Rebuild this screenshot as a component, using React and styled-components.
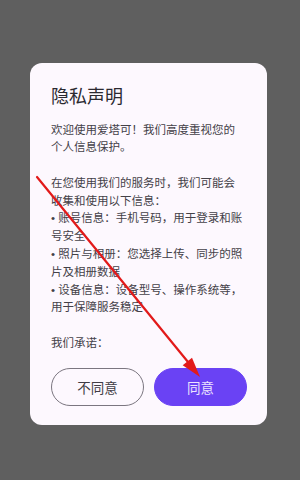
import React from "react";
import styled, { createGlobalStyle } from "styled-components";

const GlobalStyle = createGlobalStyle`
  html, body {
    margin: 0;
    padding: 0;
    background: #5f5f5f;
  }
  body {
    font-family: "Noto Sans CJK SC", "Noto Sans", sans-serif;
  }
`;

const Screen = styled.div`
  position: relative;
  width: 300px;
  height: 480px;
  box-sizing: border-box;
  padding: 63px 0 0 30px;
  background: #5f5f5f;
  overflow: hidden;
`;

const Dialog = styled.div`
  width: 237px;
  box-sizing: border-box;
  padding: 20px 20px 19px 21px;
  background: #fdf8fe;
  border-radius: 12px;
  display: flex;
  flex-direction: column;
`;

const Title = styled.h2`
  margin: 0;
  font-size: 18px;
  line-height: 24px;
  font-weight: 400;
  color: #2b2930;
`;

// latin font first so the bullet stays narrow, CJK glyphs fall through
const Body = styled.div`
  margin-top: 14.5px;
  height: 232px;
  padding-right: 3px;
  font-family: "Liberation Sans", "Noto Sans CJK SC", sans-serif;
  font-size: 11.5px;
  line-height: 17.8px;
  color: #444148;
`;

const Paragraph = styled.p`
  margin: 0 0 17.8px;
`;

const Actions = styled.div`
  margin-top: 14px;
  display: grid;
  grid-template-columns: 1fr 1fr;
  gap: 10px;
`;

const Button = styled.button`
  height: 38px;
  border-radius: 19px;
  font-family: inherit;
  font-size: 13.5px;
  padding: 0;
  cursor: pointer;
  border: 1px solid ${p => (p.$primary ? "#6a42f4" : "#7b7680")};
  background: ${p => (p.$primary ? "#6a42f4" : "transparent")};
  color: ${p => (p.$primary ? "#ece4ff" : "#3f3c44")};
`;

const Overlay = styled.svg`
  position: absolute;
  top: 0;
  left: 0;
  pointer-events: none;
`;

const Arrow = () => (
  <Overlay width="300" height="480" viewBox="0 0 300 480">
    <line x1="37" y1="177" x2="188" y2="362" stroke="#e21a1a" strokeWidth="2.2" strokeLinecap="round" />
    <polygon points="200,377 182.7,365.3 192,357.7" fill="#e21a1a" />
  </Overlay>
);

const items = [
  "账号信息：手机号码，用于登录和账号安全",
  "照片与相册：您选择上传、同步的照片及相册数据",
  "设备信息：设备型号、操作系统等，用于保障服务稳定",
];

const App = () => {
  return (
    <>
      <GlobalStyle />
      <Screen>
        <Dialog>
          <Title>隐私声明</Title>
          <Body>
            <Paragraph>欢迎使用爱塔可！我们高度重视您的个人信息保护。</Paragraph>
            <Paragraph>
              在您使用我们的服务时，我们可能会收集和使用以下信息：
              {items.map(item => (
                <React.Fragment key={item}>
                  <br />
                  {"• " + item}
                </React.Fragment>
              ))}
            </Paragraph>
            <Paragraph>我们承诺：</Paragraph>
          </Body>
          <Actions>
            <Button>不同意</Button>
            <Button $primary>同意</Button>
          </Actions>
        </Dialog>
        <Arrow />
      </Screen>
    </>
  );
};

export default App;
